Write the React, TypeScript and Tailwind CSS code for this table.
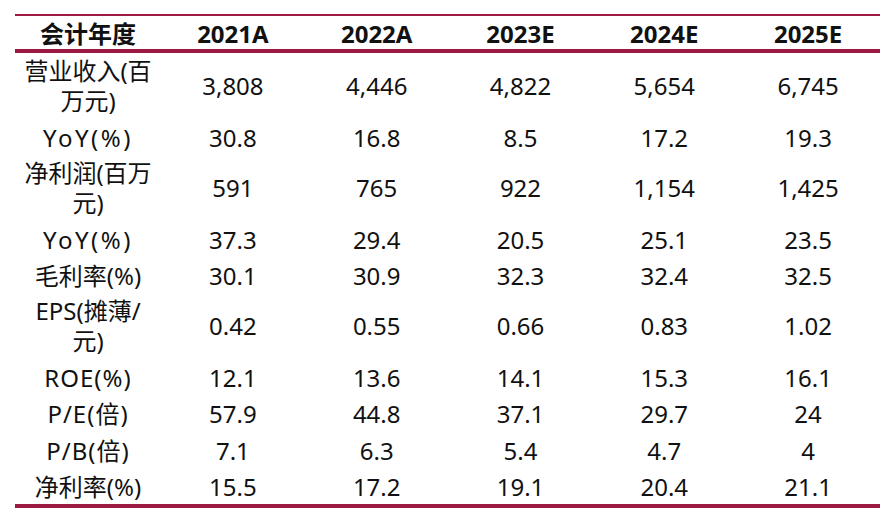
import React from 'react';

type Row = {
    label: React.ReactNode;
    values: string[];
    tall?: boolean;
    track?: string;
};

const years = ['2021A', '2022A', '2023E', '2024E', '2025E'];

const rows: Row[] = [
    { label: <>营业收入(百<br />万元)</>, values: ['3,808', '4,446', '4,822', '5,654', '6,745'], tall: true },
    { label: 'YoY(%)', values: ['30.8', '16.8', '8.5', '17.2', '19.3'], track: 'tracking-[2.5px]' },
    { label: <>净利润(百万<br />元)</>, values: ['591', '765', '922', '1,154', '1,425'], tall: true },
    { label: 'YoY(%)', values: ['37.3', '29.4', '20.5', '25.1', '23.5'], track: 'tracking-[2.5px]' },
    { label: '毛利率(%)', values: ['30.1', '30.9', '32.3', '32.4', '32.5'] },
    { label: <>EPS(摊薄/<br />元)</>, values: ['0.42', '0.55', '0.66', '0.83', '1.02'], tall: true },
    { label: 'ROE(%)', values: ['12.1', '13.6', '14.1', '15.3', '16.1'], track: 'tracking-[1px]' },
    { label: 'P/E(倍)', values: ['57.9', '44.8', '37.1', '29.7', '24'], track: 'tracking-[1px]' },
    { label: 'P/B(倍)', values: ['7.1', '6.3', '5.4', '4.7', '4'], track: 'tracking-[1px]' },
    { label: '净利率(%)', values: ['15.5', '17.2', '19.1', '20.4', '21.1'] },
];

export default function App() {
    return (
        <div className="w-[896px] h-[524px] bg-white pt-[14px] pl-[15px] font-['Noto_Sans','Noto_Sans_CJK_SC',sans-serif] text-[#111] text-[24px]">
            <div className="w-[865px] border-t-2 border-b-4 border-[#9c1a42]">
                <div className="grid grid-cols-[146px_repeat(5,1fr)] h-[37px] items-center pb-[3px] border-b-4 border-[#9c1a42] font-bold">
                    <div className="text-center">会计年度</div>
                    {years.map((y) => (
                        <div key={y} className="text-center">{y}</div>
                    ))}
                </div>
                {rows.map((row, i) => (
                    <div
                        key={i}
                        className={`grid grid-cols-[146px_repeat(5,1fr)] items-center ${row.tall ? 'h-[65px] pt-[1px]' : 'h-[36.5px] pt-[2px]'}`}
                    >
                        <div className={`text-center leading-[30px] ${row.track ?? ''}`}>{row.label}</div>
                        {row.values.map((v, j) => (
                            <div key={j} className="text-center">{v}</div>
                        ))}
                    </div>
                ))}
            </div>
        </div>
    );
}
